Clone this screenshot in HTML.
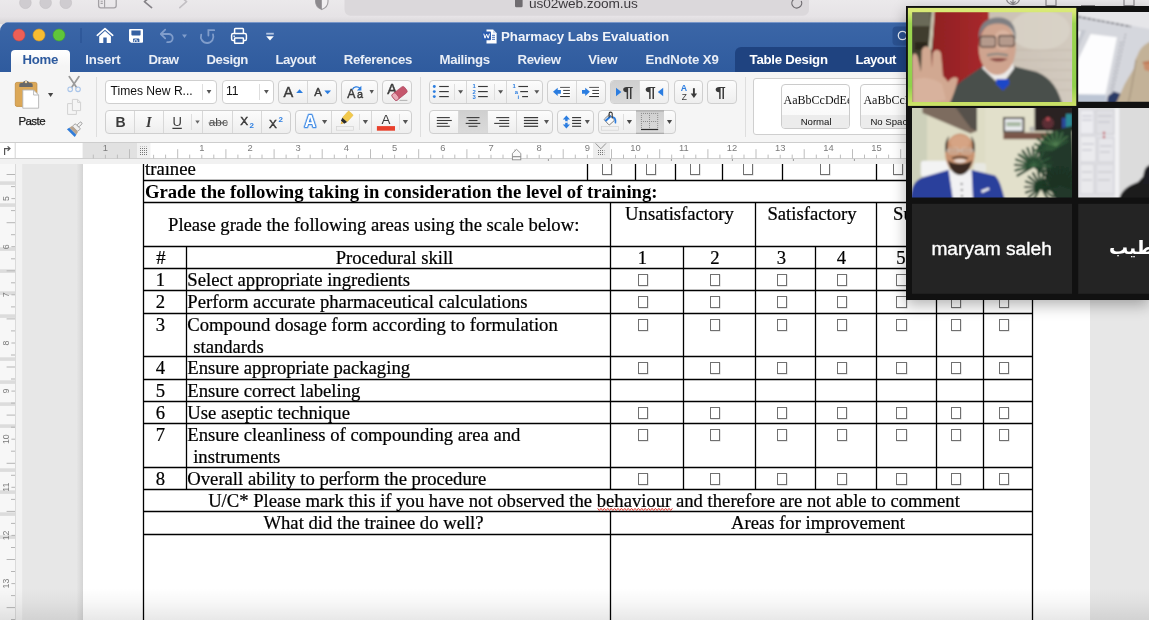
<!DOCTYPE html>
<html><head><meta charset="utf-8"><title>Pharmacy Labs Evaluation</title>
<style>
*{box-sizing:border-box;margin:0;padding:0}
html,body{width:1149px;height:620px;overflow:hidden;background:#e9e7e9;font-family:"Liberation Sans",sans-serif;-webkit-font-smoothing:antialiased}
#word,#zoom,#safari{will-change:transform}
.abs{position:absolute}
#safari{position:absolute;left:0;top:0;width:1149px;height:24px;background:#e9e6e8;overflow:hidden}
#word{position:absolute;left:0;top:22px;width:1149px;height:598px;background:#e4e4e4;border-top-left-radius:9px;overflow:hidden}
#title{position:absolute;left:0;top:0;width:1149px;height:50px;background:linear-gradient(#3b66a7,#2f5b9e)}
.tab{position:absolute;top:30px;color:#e9eef6;font-size:13.2px;font-weight:bold;white-space:nowrap;line-height:16px}
#ribbon{position:absolute;left:0;top:50px;width:1149px;height:71px;background:#f5f5f5;border-bottom:1px solid #cdcdcd}
.grp{position:absolute;height:23.4px;border:1px solid #cfcfcf;border-radius:4px;background:linear-gradient(#fcfcfc,#eeeeee);overflow:hidden}
.dv{position:absolute;top:0;width:1px;height:21.4px;background:#d8d8d8}
#ruler{position:absolute;left:0;top:121px;width:1149px;height:22px;overflow:hidden}
#doc{position:absolute;left:0;top:142px;width:1149px;height:456px;background:#e7e7e7;overflow:hidden}
#page{position:absolute;left:83px;top:0;width:1007px;height:456px;background:#fff}
.hl{position:absolute;background:#000}
.vl{position:absolute;background:#000}
.t{position:absolute;font-family:"Liberation Serif",serif;font-size:18.67px;line-height:22px;white-space:nowrap;color:#000;-webkit-text-stroke:0.22px #000}
.cb{position:absolute;width:10.4px;height:12.2px;border:0.9px solid #707070;background:#fff;box-shadow:0.5px 0.5px 0 #d0d0d0}
.sq{text-decoration:underline wavy #d33;text-decoration-thickness:1px;text-underline-offset:2px}
#zoom{position:absolute;left:906px;top:6px;width:243px;height:293.5px;background:#111;overflow:hidden;box-shadow:0 5px 14px rgba(0,0,0,0.30)}

.t.b{-webkit-text-stroke:0}
</style></head><body>
<div id="safari">
<svg class="abs" style="left:0;top:0" width="1149" height="24">
 <defs><linearGradient id="sg" x1="0" y1="0" x2="0" y2="1"><stop offset="0" stop-color="#ebe9eb"/><stop offset="0.7" stop-color="#e6e3e6"/><stop offset="1" stop-color="#d6d3d6"/></linearGradient></defs>
 <rect x="0" y="0" width="1149" height="24" fill="url(#sg)"/>
 <circle cx="25.4" cy="2.8" r="5.8" fill="#cfccd0" stroke="#c2bfc3" stroke-width="0.6"/>
 <circle cx="45.6" cy="2.8" r="5.8" fill="#cfccd0" stroke="#c2bfc3" stroke-width="0.6"/>
 <circle cx="65.8" cy="2.8" r="5.8" fill="#cfccd0" stroke="#c2bfc3" stroke-width="0.6"/>
 <rect x="98.6" y="-6" width="17.6" height="13.8" rx="2.2" fill="none" stroke="#a3a0a4" stroke-width="1.3"/>
 <path d="M104.6 -6V7.8M100.6 1.2H102.8M100.6 3.4H102.8" stroke="#a3a0a4" stroke-width="1.1"/>
 <path d="M151.6 -4L144.4 1.6L151.6 7.6" stroke="#858287" stroke-width="1.6" fill="none" stroke-linecap="round" stroke-linejoin="round"/>
 <path d="M179.8 -4L186.6 1.6L179.8 7.6" stroke="#c3c0c4" stroke-width="1.6" fill="none" stroke-linecap="round" stroke-linejoin="round"/>
 <path d="M315.6 -4V1.5C315.6 5.5 318.6 8.3 321.8 9.6C325 8.3 328 5.5 328 1.5V-4Z" fill="#f1eff1" stroke="#a09da1" stroke-width="1.1"/>
 <path d="M315.6 -4V1.5C315.6 5.5 318.6 8.3 321.8 9.6V-4Z" fill="#8c898d"/>
 <rect x="344.5" y="-10" width="464.5" height="25.8" rx="6" fill="#dbd8db"/>
 <rect x="515" y="-3" width="7.6" height="10.2" rx="1.3" fill="#6f6c70"/>
 <path d="M793.6 -0.6A4.9 4.9 0 1 0 801.2 1" stroke="#6f6c70" stroke-width="1.2" fill="none"/>
 <path d="M1013 -2V3.6M1010.4 1.4L1013 4L1015.6 1.4M1006.4 -2A6.6 6.6 0 0 0 1019.6 -2" stroke="#8c898d" stroke-width="1.2" fill="none"/>
 <path d="M1046 -2V5.6H1056V-2M1081 5.6H1095M1124 -2V5.6H1134V-2" stroke="#8c898d" stroke-width="1.2" fill="none"/>
</svg>
<div class="abs" style="left:529px;top:-4.6px;font-size:13.7px;line-height:17px;color:#3d3a3e;white-space:nowrap;letter-spacing:-0.1px" id="url">us02web.zoom.us</div>
</div>
<div id="word">
<div id="title">
<div class="abs" style="left:0;top:0;width:1149px;height:1px;background:#7896c8"></div>
<div class="abs" style="left:735px;top:25px;width:414px;height:25px;background:#1f4380;border-top-left-radius:6px"></div>
<div class="abs" style="left:11px;top:28px;width:59px;height:23px;background:linear-gradient(#ffffff,#f5f5f5 70%);border-radius:4px 4px 0 0"></div>
<svg class="abs" style="left:0;top:0" width="1149" height="50" viewBox="0 22 1149 50">
 <!-- traffic lights -->
 <circle cx="19" cy="35" r="6" fill="#ee5f56" stroke="#d94a41" stroke-width="0.6"/>
 <circle cx="39" cy="35" r="6" fill="#f8bc31" stroke="#dfa023" stroke-width="0.6"/>
 <circle cx="59" cy="35" r="6" fill="#5fc63a" stroke="#4aa82a" stroke-width="0.6"/>
 <rect x="80.5" y="28" width="1" height="15" fill="#274f90"/>
 <!-- home -->
 <path d="M97.3 35.3L105 28.6L112.7 35.3" stroke="#fff" stroke-width="1.7" fill="none" stroke-linecap="round" stroke-linejoin="round"/>
 <path d="M99.2 36.2L105 31.1L110.9 36.2V43H106.7V37.6H103.3V43H99.2Z" fill="#fff"/>
 <!-- save -->
 <path d="M130 29H142a1 1 0 0 1 1 1V41.8a1 1 0 0 1-1 1H131L129 40.8V30a1 1 0 0 1 1-1Z" fill="#fff"/>
 <path d="M131.4 30.4H140.6V34.6a1 1 0 0 1-1 1H132.4a1 1 0 0 1-1-1Z" fill="#3560a2"/>
 <path d="M133 42V39.3a0.9 0.9 0 0 1 .9-.9H138.5a0.9 0.9 0 0 1 .9.9V42Z" fill="#3560a2"/>
 <path d="M134.3 42V40.6a0.8 0.8 0 0 1 .8-.8h1.2a0.8 0.8 0 0 1 .8.8V42" fill="none" stroke="#fff" stroke-width="0.9"/>
 <!-- undo -->
 <path d="M165.2 29.6L160.8 34L165.2 38.4M161 34H168.6a4.1 4.1 0 0 1 0 8.2H167.2" stroke="#809dcb" stroke-width="1.8" fill="none" stroke-linecap="round" stroke-linejoin="round"/>
 <path d="M182 34.4H187L184.5 37.9Z" fill="#809dcb"/>
 <!-- redo (circular arrow) -->
 <path d="M201.2 34.6A6.3 6.3 0 1 0 213 34.4" stroke="#809dcb" stroke-width="1.8" fill="none" stroke-linecap="round"/>
 <path d="M214.2 30.2H208.4V35.6" stroke="#809dcb" stroke-width="1.8" fill="none" stroke-linecap="round" stroke-linejoin="miter"/>
 <!-- print -->
 <rect x="234.6" y="28.6" width="8.8" height="6" rx="0.8" fill="none" stroke="#fff" stroke-width="1.5"/>
 <rect x="231.6" y="33.6" width="14.8" height="7" rx="1.6" fill="#3560a2" stroke="#fff" stroke-width="1.5"/>
 <rect x="234.6" y="38" width="8.8" height="5.2" rx="0.5" fill="#3560a2" stroke="#fff" stroke-width="1.5"/>
 <rect x="233.4" y="35.6" width="1.6" height="1.2" fill="#fff"/>
 <!-- customize -->
 <rect x="266.2" y="32.8" width="7.6" height="1.8" fill="#b4c5e2"/>
 <path d="M266.2 36.2H273.8L270 40.4Z" fill="#fff"/>
 <!-- word doc icon -->
 <path d="M486.5 29.6H493L496.6 33.2V43.4H486.5Z" fill="#fff"/>
 <path d="M493 29.6V33.2H496.6Z" fill="#c9d6ea"/>
 <rect x="482.4" y="31.6" width="8.6" height="8.6" rx="1" fill="#2b5cb0"/>
 <path d="M483.8 33.7L485 38.2L486.6 34.2L488.2 38.2L489.5 33.7" stroke="#fff" stroke-width="1" fill="none" stroke-linejoin="round"/>
 <path d="M492 35.3H495M492 37.3H495M492 39.3H495" stroke="#2b5cb0" stroke-width="0.9"/>
 <!-- search box -->
 <rect x="892.5" y="26.5" width="60" height="19" rx="4" fill="#2a5190"/>
 <circle cx="902.5" cy="35.5" r="4.2" fill="none" stroke="#e4ebf5" stroke-width="1.3"/>
</svg>
<div class="abs" id="doctitle" style="left:501px;top:6px;color:#f0f3f9;font-weight:bold;font-size:13.3px;line-height:17px;white-space:nowrap;letter-spacing:-0.05px">Pharmacy Labs Evaluation</div>
<div class="tab" id="tb0" style="left:22.6px;letter-spacing:-0.28px;color:#2d5a9e">Home</div>
<div class="tab" id="tb1" style="left:85.3px;letter-spacing:-0.10px">Insert</div>
<div class="tab" id="tb2" style="left:148.5px;letter-spacing:-0.58px">Draw</div>
<div class="tab" id="tb3" style="left:206.5px;letter-spacing:-0.43px">Design</div>
<div class="tab" id="tb4" style="left:275.4px;letter-spacing:-0.49px">Layout</div>
<div class="tab" id="tb5" style="left:343.7px;letter-spacing:-0.27px">References</div>
<div class="tab" id="tb6" style="left:439.6px;letter-spacing:-0.34px">Mailings</div>
<div class="tab" id="tb7" style="left:517.5px;letter-spacing:-0.39px">Review</div>
<div class="tab" id="tb8" style="left:588.3px;letter-spacing:-0.24px">View</div>
<div class="tab" id="tb9" style="left:645.5px;letter-spacing:-0.07px">EndNote X9</div>
<div class="tab" id="tb10" style="left:749.6px;letter-spacing:-0.25px;color:#fff">Table Design</div>
<div class="tab" id="tb11" style="left:855.6px;letter-spacing:-0.49px;color:#fff">Layout</div>
</div>
<div id="ribbon">
<div class="grp" style="left:105.3px;top:8.3px;width:111.6px;background:#fff;"><div class="dv" style="left:95.6px;top:3px;height:16px;background:#dedede"></div></div>
<div class="grp" style="left:221.6px;top:8.3px;width:52.5px;background:#fff;"><div class="dv" style="left:36.3px;top:3px;height:16px;background:#dedede"></div></div>
<div class="grp" style="left:278.4px;top:8.3px;width:58.5px;"><div class="dv" style="left:27.5px"></div></div>
<div class="grp" style="left:341.4px;top:8.3px;width:36.5px;"></div>
<div class="grp" style="left:382.4px;top:8.3px;width:29.5px;"></div>
<div class="grp" style="left:429.4px;top:8.3px;width:113.5px;"><div class="dv" style="left:35.7px"></div><div class="dv" style="left:75.7px"></div><div class="dv" style="left:23.5px;top:3px;height:16px;background:#dedede"></div><div class="dv" style="left:63.5px;top:3px;height:16px;background:#dedede"></div></div>
<div class="grp" style="left:547.4px;top:8.3px;width:58.5px;"><div class="dv" style="left:27.5px"></div></div>
<div class="grp" style="left:610.4px;top:8.3px;width:58.5px;"><div class="abs" style="left:-1.0px;top:0;width:29.2px;height:21.4px;background:linear-gradient(#d0d0d0,#dadada)"></div><div class="dv" style="left:27.7px"></div></div>
<div class="grp" style="left:673.6px;top:8.3px;width:29.3px;"></div>
<div class="grp" style="left:707.4px;top:8.3px;width:29.5px;"></div>
<div class="grp" style="left:105.3px;top:38.4px;width:185.6px;"><div class="dv" style="left:27.8px"></div><div class="dv" style="left:56.6px"></div><div class="dv" style="left:96.2px"></div><div class="dv" style="left:125.8px"></div><div class="dv" style="left:154.8px"></div><div class="dv" style="left:84.6px;top:3px;height:16px;background:#dedede"></div></div>
<div class="grp" style="left:295.4px;top:38.4px;width:116.5px;"><div class="dv" style="left:34.5px"></div><div class="dv" style="left:74.5px"></div><div class="dv" style="left:62.5px;top:3px;height:16px;background:#dedede"></div><div class="dv" style="left:102.5px;top:3px;height:16px;background:#dedede"></div></div>
<div class="grp" style="left:429.4px;top:38.4px;width:123.5px;"><div class="abs" style="left:28.2px;top:0;width:29.0px;height:21.4px;background:linear-gradient(#d0d0d0,#dadada)"></div><div class="dv" style="left:27.7px"></div><div class="dv" style="left:56.7px"></div><div class="dv" style="left:85.7px"></div></div>
<div class="grp" style="left:557.4px;top:38.4px;width:36.5px;"></div>
<div class="grp" style="left:598.0px;top:38.4px;width:77.9px;"><div class="abs" style="left:36.6px;top:0;width:28.4px;height:21.4px;background:linear-gradient(#d0d0d0,#dadada)"></div><div class="dv" style="left:24.1px;top:3px;height:16px;background:#dedede"></div></div>
<div class="abs" style="left:95.8px;top:5px;width:1px;height:60px;background:#dedede"></div>
<div class="abs" style="left:419.9px;top:5px;width:1px;height:60px;background:#dedede"></div>
<div class="abs" style="left:744.9px;top:5px;width:1px;height:60px;background:#dedede"></div>
<div class="abs" style="left:753px;top:6.4px;width:420px;height:57px;background:#fff;border:1px solid #cfcfcf;border-radius:3px"></div>
<div class="abs" style="left:780.6px;top:12.4px;width:69px;height:45px;border:1px solid #cbcbcb;border-radius:4px;background:linear-gradient(#ffffff,#f7f7f7);overflow:hidden"><div class="abs" style="left:2px;top:7.4px;font-family:'Liberation Serif',serif;font-size:12px;line-height:14px;white-space:nowrap;color:#111">AaBbCcDdEe</div><div class="abs" style="left:0;top:30px;width:69px;height:14px;background:#ececec;font-size:9.6px;line-height:14px;text-align:center;color:#111;white-space:nowrap;padding-left:0;text-align:center">Normal</div></div>
<div class="abs" style="left:860.4px;top:12.4px;width:69px;height:45px;border:1px solid #cbcbcb;border-radius:4px;background:linear-gradient(#ffffff,#f7f7f7);overflow:hidden"><div class="abs" style="left:2px;top:7.4px;font-family:'Liberation Serif',serif;font-size:12px;line-height:14px;white-space:nowrap;color:#111">AaBbCcDdEe</div><div class="abs" style="left:0;top:30px;width:69px;height:14px;background:#ececec;font-size:9.6px;line-height:14px;text-align:center;color:#111;white-space:nowrap;padding-left:9px;text-align:left">No Spacing</div></div>
<div class="abs" style="left:18.4px;top:41.8px;font-size:11.5px;line-height:14px;color:#1a1a1a;letter-spacing:-0.55px;-webkit-text-stroke:0.25px #1a1a1a" id="paste">Paste</div>
<div class="abs" style="left:110.5px;top:12.3px;font-size:12.1px;line-height:15px;color:#111;white-space:nowrap" id="fname">Times New R...</div>
<div class="abs" style="left:226px;top:12.3px;font-size:12.1px;line-height:15px;color:#111;white-space:nowrap" id="fsize">11</div>
<svg class="abs" style="left:0;top:0" width="1149" height="70" viewBox="0 72 1149 70">
<rect x="15.3" y="82.4" width="21.6" height="24" rx="1.6" fill="#dca857" stroke="#c18d3f" stroke-width="0.8"/>
<path d="M19.3 86.9V84.8a1.8 1.8 0 0 1 1.8-1.8H22.7a3.4 3.4 0 0 1 6.6 0H30.9a1.8 1.8 0 0 1 1.8 1.8V86.9Z" fill="#686868"/>
<circle cx="26" cy="82" r="1.25" fill="#edd3a4"/>
<path d="M22.8 90H33.6L38.6 95V108.2H22.8Z" fill="#fff" stroke="#b4b4b4" stroke-width="0.9" stroke-linejoin="round"/>
<path d="M33.6 90V95H38.6" fill="none" stroke="#b4b4b4" stroke-width="0.9"/>
<path d="M48.0 93.0H53.2L50.6 96.9Z" fill="#444"/>
<path d="M69.2 76.6L76.6 87.4M79 76.6L71.6 87.4" stroke="#9a9a9a" stroke-width="1.7" stroke-linecap="round"/>
<circle cx="70.2" cy="89.3" r="2.3" fill="none" stroke="#a9c5ea" stroke-width="1.1"/><circle cx="78" cy="89.3" r="2.3" fill="none" stroke="#a9c5ea" stroke-width="1.1"/>
<path d="M72.4 99.4H77.6L80.6 102.4V110.6H72.4Z" fill="#f5f5f5" stroke="#d2d2d2" stroke-width="1"/><path d="M77.6 99.4V102.4H80.6" fill="none" stroke="#d2d2d2" stroke-width="1"/>
<path d="M67.6 103.6H72.4V110.6H76.4V114.4H67.6Z" fill="#f5f5f5" stroke="#d2d2d2" stroke-width="1"/>
<g transform="rotate(45 74 130)"><rect x="72.7" y="119.4" width="2.6" height="5.6" rx="1.1" fill="#f4f4f4" stroke="#8c8c8c" stroke-width="0.8"/><rect x="70.3" y="124.6" width="7.4" height="3.9" rx="0.8" fill="#f0f0f0" stroke="#8c8c8c" stroke-width="0.8"/><path d="M69.8 128.6H78.2L79 131.7H69Z" fill="#b9a48f"/><path d="M69 131.7H79L79.5 134.5H68.5Z" fill="#2f7bd8"/></g>
<path d="M206.6 90.0H211.4L209.0 93.8Z" fill="#555"/>
<path d="M264.0 90.0H268.8L266.4 93.8Z" fill="#555"/>
<text x="283.4" y="96.9" font-family="Liberation Sans" font-size="14.6" font-weight="normal" fill="#3a3a3a" text-anchor="start" stroke="#3a3a3a" stroke-width="0.42">A</text>
<path d="M296.2 93H303L299.6 89.2Z" fill="#2b7de0"/>
<text x="314.3" y="95.9" font-family="Liberation Sans" font-size="11.4" font-weight="normal" fill="#3a3a3a" text-anchor="start" stroke="#3a3a3a" stroke-width="0.42">A</text>
<path d="M324.3 90.4H331L327.65 94.2Z" fill="#2b7de0"/>
<text x="347.2" y="97.9" font-family="Liberation Sans" font-size="12.2" font-weight="normal" fill="#3a3a3a" text-anchor="start" stroke="#3a3a3a" stroke-width="0.42">A</text>
<text x="357" y="97.9" font-family="Liberation Sans" font-size="10.8" font-weight="normal" fill="#3a3a3a" text-anchor="start" stroke="#3a3a3a" stroke-width="0.42">a</text>
<path d="M352.4 89.6C353.6 86.6 357.6 86 360 88.2" stroke="#2b7de0" stroke-width="1.3" fill="none"/><path d="M361.4 85.8V90.4H356.9Z" fill="#2b7de0"/>
<path d="M369.5 90.0H373.9L371.7 93.8Z" fill="#555"/>
<text x="387.3" y="94.1" font-family="Liberation Sans" font-size="14.4" font-weight="normal" fill="#3a3a3a" text-anchor="start" stroke="#3a3a3a" stroke-width="0.42">A</text>
<g transform="rotate(-38 399.5 93.5)"><rect x="391.9" y="89.7" width="15.4" height="7.6" rx="2" fill="#c5576d" stroke="#a8405a" stroke-width="0.6"/><rect x="391.9" y="89.7" width="4.8" height="7.6" rx="1.8" fill="#e8aab6" stroke="#a8405a" stroke-width="0.6"/></g>
<path d="M399.5 100.4H407.4" stroke="#aaa" stroke-width="0.9"/>
<circle cx="434.3" cy="86.5" r="1.45" fill="#2b7de0"/><path d="M439.2 86.5H448.8" stroke="#3a3a3a" stroke-width="1.15"/>
<circle cx="434.3" cy="91.6" r="1.45" fill="#2b7de0"/><path d="M439.2 91.6H448.8" stroke="#3a3a3a" stroke-width="1.15"/>
<circle cx="434.3" cy="96.6" r="1.45" fill="#2b7de0"/><path d="M439.2 96.6H448.8" stroke="#3a3a3a" stroke-width="1.15"/>
<path d="M458.1 90.2H463.1L460.6 93.8Z" fill="#555"/>
<text x="472.6" y="88.39999999999999" font-family="Liberation Sans" font-size="5.9" font-weight="bold" fill="#2b7de0" text-anchor="start" >1</text>
<path d="M478.1 86.5H487.8" stroke="#3a3a3a" stroke-width="1.15"/>
<text x="472.6" y="93.5" font-family="Liberation Sans" font-size="5.9" font-weight="bold" fill="#2b7de0" text-anchor="start" >2</text>
<path d="M478.1 91.60000000000001H487.8" stroke="#3a3a3a" stroke-width="1.15"/>
<text x="472.6" y="98.5" font-family="Liberation Sans" font-size="5.9" font-weight="bold" fill="#2b7de0" text-anchor="start" >3</text>
<path d="M478.1 96.60000000000001H487.8" stroke="#3a3a3a" stroke-width="1.15"/>
<path d="M498.1 90.2H503.1L500.6 93.8Z" fill="#555"/>
<text x="512.6" y="88.4" font-family="Liberation Sans" font-size="5.9" font-weight="bold" fill="#2b7de0" text-anchor="start" >1</text>
<path d="M518.4 86.5H528" stroke="#3a3a3a" stroke-width="1.15"/>
<text x="514.8" y="93.5" font-family="Liberation Sans" font-size="5.9" font-weight="bold" fill="#2b7de0" text-anchor="start" >a</text>
<path d="M520.2 91.6H528" stroke="#3a3a3a" stroke-width="1.15"/>
<text x="517.4" y="98.5" font-family="Liberation Sans" font-size="5.9" font-weight="bold" fill="#2b7de0" text-anchor="start" >i</text>
<path d="M522.1 96.6H528" stroke="#3a3a3a" stroke-width="1.15"/>
<path d="M534.3 90.2H539.3L536.8 93.8Z" fill="#555"/>
<rect x="559.5" y="86.4" width="11" height="11.2" fill="#fff" opacity="0.85"/>
<path d="M560.1 87.4H569.9" stroke="#5a5a5a" stroke-width="1.05"/>
<path d="M563.2 90.45H569.9" stroke="#4a4a4a" stroke-width="1.05"/>
<path d="M563.2 93.5H569.9" stroke="#404040" stroke-width="1.05"/>
<path d="M560.1 96.55H569.9" stroke="#333" stroke-width="1.05"/>
<path d="M553 91.85L557.7 87.8V89.9H560.9V93.8H557.7V95.9Z" fill="#2b7de0"/>
<rect x="588.6" y="86.4" width="11" height="11.2" fill="#fff" opacity="0.85"/>
<path d="M589.2 87.4H599.0" stroke="#5a5a5a" stroke-width="1.05"/>
<path d="M592.3 90.45H599.0" stroke="#4a4a4a" stroke-width="1.05"/>
<path d="M592.3 93.5H599.0" stroke="#404040" stroke-width="1.05"/>
<path d="M589.2 96.55H599.0" stroke="#333" stroke-width="1.05"/>
<path d="M589.9 91.85L585.2 87.8V89.9H582V93.8H585.2V95.9Z" fill="#2b7de0"/>
<path d="M616 87.8V96.2L621.4 92Z" fill="#2b7de0"/>
<text transform="translate(622.4 96.9) scale(1.27 1)" font-family="Liberation Sans" font-size="15.4" font-weight="bold" fill="#3a3a3a">¶</text>
<text transform="translate(644.9 96.9) scale(1.27 1)" font-family="Liberation Sans" font-size="15.4" font-weight="bold" fill="#3a3a3a">¶</text>
<path d="M663.2 87.8V96.2L657.8 92Z" fill="#2b7de0"/>
<text x="684" y="90.7" font-family="Liberation Sans" font-size="8.8" font-weight="bold" fill="#2b7de0" text-anchor="middle" >A</text>
<text x="684.2" y="99.6" font-family="Liberation Sans" font-size="8.4" font-weight="normal" fill="#3a3a3a" text-anchor="middle" >Z</text>
<path d="M693.9 88.2V94.6" stroke="#3a3a3a" stroke-width="1.9"/><path d="M690.7 93.6H697.1L693.9 97.9Z" fill="#3a3a3a"/>
<text transform="translate(715.0 96.9) scale(1.27 1)" font-family="Liberation Sans" font-size="15.4" font-weight="bold" fill="#3a3a3a">¶</text>
<text x="115.4" y="126.9" font-family="Liberation Sans" font-size="14" font-weight="bold" fill="#3a3a3a" text-anchor="start" >B</text>
<text x="148.8" y="126.9" font-family="Liberation Serif" font-size="14.4" font-weight="bold" fill="#3a3a3a" text-anchor="middle" font-style="italic">I</text>
<text x="177.1" y="126.3" font-family="Liberation Sans" font-size="13" font-weight="normal" fill="#3a3a3a" text-anchor="middle" >U</text>
<path d="M172.4 128.4H181.8" stroke="#3a3a3a" stroke-width="1.1"/>
<path d="M195.3 120.4H199.7L197.5 123.8Z" fill="#666"/>
<text x="218.3" y="126.3" font-family="Liberation Sans" font-size="11.8" font-weight="normal" fill="#4a4a4a" text-anchor="middle" >abc</text>
<path d="M208.6 122.9H228" stroke="#555" stroke-width="0.9"/>
<text x="240.2" y="124.8" font-family="Liberation Sans" font-size="11.8" font-weight="normal" fill="#3a3a3a" text-anchor="start" stroke="#3a3a3a" stroke-width="0.45">X</text>
<text x="249.5" y="128.2" font-family="Liberation Sans" font-size="8" font-weight="bold" fill="#2b7de0" text-anchor="start" >2</text>
<text x="268.9" y="127.9" font-family="Liberation Sans" font-size="11.8" font-weight="normal" fill="#3a3a3a" text-anchor="start" stroke="#3a3a3a" stroke-width="0.45">X</text>
<text x="278.5" y="121.7" font-family="Liberation Sans" font-size="8" font-weight="bold" fill="#2b7de0" text-anchor="start" >2</text>
<text x="310.2" y="127.4" font-family="Liberation Sans" font-size="15.8" font-weight="bold" text-anchor="middle" fill="#fff" stroke="#9cc4f3" stroke-width="3" stroke-linejoin="round">A</text>
<text x="310.2" y="127.4" font-family="Liberation Sans" font-size="15.8" font-weight="bold" text-anchor="middle" fill="#fff" stroke="#2b7de0" stroke-width="1.5" stroke-linejoin="round" paint-order="stroke">A</text>
<path d="M322.0 119.9H327.2L324.6 123.9Z" fill="#555"/>
<g transform="rotate(42 345.5 119)"><rect x="342.3" y="110.8" width="6.4" height="9.4" rx="1" fill="#f2c94c" stroke="#e0b63a" stroke-width="0.5"/><path d="M342.3 120.2H348.7L347.7 123.4H343.3Z" fill="#2a2a2a"/><path d="M343.9 123.4H347.1L345.5 126.2Z" fill="#e3b33c"/></g>
<rect x="336.4" y="126.6" width="17" height="3.6" fill="#f1f1f1" stroke="#d3d3d3" stroke-width="0.7"/>
<path d="M362.8 119.9H368.0L365.4 123.9Z" fill="#555"/>
<text x="385.9" y="124.1" font-family="Liberation Sans" font-size="13.4" font-weight="normal" fill="#3a3a3a" text-anchor="middle" >A</text>
<rect x="376.9" y="126.1" width="18.1" height="4.6" fill="#e8402c"/>
<path d="M402.8 119.9H408.0L405.4 123.9Z" fill="#555"/>
<path d="M436.8 117.6h13" stroke="#3a3a3a" stroke-width="1.1"/>
<path d="M436.8 120.5h15" stroke="#3a3a3a" stroke-width="1.1"/>
<path d="M436.8 123.4h11" stroke="#3a3a3a" stroke-width="1.1"/>
<path d="M436.8 126.3h13" stroke="#3a3a3a" stroke-width="1.1"/>
<path d="M466.5 117.6h13" stroke="#3a3a3a" stroke-width="1.1"/>
<path d="M468.5 120.5h9" stroke="#3a3a3a" stroke-width="1.1"/>
<path d="M465.7 123.4h14.6" stroke="#3a3a3a" stroke-width="1.1"/>
<path d="M468.5 126.3h9" stroke="#3a3a3a" stroke-width="1.1"/>
<path d="M496.2 117.6h13" stroke="#3a3a3a" stroke-width="1.1"/>
<path d="M499.2 120.5h10" stroke="#3a3a3a" stroke-width="1.1"/>
<path d="M494.2 123.4h15" stroke="#3a3a3a" stroke-width="1.1"/>
<path d="M499.2 126.3h10" stroke="#3a3a3a" stroke-width="1.1"/>
<path d="M523.9 117.6H538.1" stroke="#3a3a3a" stroke-width="1.25"/>
<path d="M523.9 120.5H538.1" stroke="#3a3a3a" stroke-width="1.25"/>
<path d="M523.9 123.4H538.1" stroke="#3a3a3a" stroke-width="1.25"/>
<path d="M523.9 126.3H538.1" stroke="#3a3a3a" stroke-width="1.25"/>
<path d="M544.0 120.1H549.0L546.5 123.9Z" fill="#555"/>
<path d="M566.4 115.4L562.8 119.4H565.2V124.6H562.8L566.4 128.6L570 124.6H567.6V119.4H570Z" fill="#2b7de0"/>
<rect x="565" y="121.2" width="2.8" height="1.6" fill="#f3f3f3"/>
<path d="M572.1 117.6H581.1" stroke="#3a3a3a" stroke-width="1.15"/>
<path d="M572.1 120.5H581.1" stroke="#3a3a3a" stroke-width="1.15"/>
<path d="M572.1 123.4H581.1" stroke="#3a3a3a" stroke-width="1.15"/>
<path d="M572.1 126.3H581.1" stroke="#3a3a3a" stroke-width="1.15"/>
<path d="M584.8 120.1H589.8L587.3 123.9Z" fill="#555"/>
<g transform="rotate(-42 609.3 119.8)"><rect x="605.6" y="115.9" width="7.4" height="7.8" rx="0.9" fill="#fbfbfb" stroke="#7a7a7a" stroke-width="0.9"/><rect x="605.6" y="117" width="7.4" height="2.1" fill="#2b7de0"/></g>
<path d="M612.4 116.3C615.6 116.5 617 119.6 616.1 123.5C615.3 123.9 614.5 123.1 614.6 122C614.9 119.6 614 118.2 611.8 117.5Z" fill="#2b7de0"/>
<path d="M609.1 117.6V113.7a1.55 1.55 0 0 1 3.1 0V118.2" stroke="#333" stroke-width="1.1" fill="none"/>
<rect x="601.6" y="126.6" width="17" height="3.6" fill="#f1f1f1" stroke="#d3d3d3" stroke-width="0.7"/>
<path d="M626.8 120.0H632.0L629.4 124.0Z" fill="#4a4a4a"/>
<rect x="640.95" y="112.95" width="0.9" height="0.9" fill="#7c7c7c"/>
<rect x="640.95" y="121.07" width="0.9" height="0.9" fill="#7c7c7c"/>
<rect x="642.99" y="112.95" width="0.9" height="0.9" fill="#7c7c7c"/>
<rect x="642.99" y="121.07" width="0.9" height="0.9" fill="#7c7c7c"/>
<rect x="645.03" y="112.95" width="0.9" height="0.9" fill="#7c7c7c"/>
<rect x="645.03" y="121.07" width="0.9" height="0.9" fill="#7c7c7c"/>
<rect x="647.07" y="112.95" width="0.9" height="0.9" fill="#7c7c7c"/>
<rect x="647.07" y="121.07" width="0.9" height="0.9" fill="#7c7c7c"/>
<rect x="649.11" y="112.95" width="0.9" height="0.9" fill="#7c7c7c"/>
<rect x="649.11" y="121.07" width="0.9" height="0.9" fill="#7c7c7c"/>
<rect x="651.15" y="112.95" width="0.9" height="0.9" fill="#7c7c7c"/>
<rect x="651.15" y="121.07" width="0.9" height="0.9" fill="#7c7c7c"/>
<rect x="653.19" y="112.95" width="0.9" height="0.9" fill="#7c7c7c"/>
<rect x="653.19" y="121.07" width="0.9" height="0.9" fill="#7c7c7c"/>
<rect x="655.23" y="112.95" width="0.9" height="0.9" fill="#7c7c7c"/>
<rect x="655.23" y="121.07" width="0.9" height="0.9" fill="#7c7c7c"/>
<rect x="657.27" y="112.95" width="0.9" height="0.9" fill="#7c7c7c"/>
<rect x="657.27" y="121.07" width="0.9" height="0.9" fill="#7c7c7c"/>
<rect x="640.95" y="114.98" width="0.9" height="0.9" fill="#7c7c7c"/>
<rect x="649.11" y="114.98" width="0.9" height="0.9" fill="#7c7c7c"/>
<rect x="657.27" y="114.98" width="0.9" height="0.9" fill="#7c7c7c"/>
<rect x="640.95" y="117.01" width="0.9" height="0.9" fill="#7c7c7c"/>
<rect x="649.11" y="117.01" width="0.9" height="0.9" fill="#7c7c7c"/>
<rect x="657.27" y="117.01" width="0.9" height="0.9" fill="#7c7c7c"/>
<rect x="640.95" y="119.04" width="0.9" height="0.9" fill="#7c7c7c"/>
<rect x="649.11" y="119.04" width="0.9" height="0.9" fill="#7c7c7c"/>
<rect x="657.27" y="119.04" width="0.9" height="0.9" fill="#7c7c7c"/>
<rect x="640.95" y="123.10" width="0.9" height="0.9" fill="#7c7c7c"/>
<rect x="649.11" y="123.10" width="0.9" height="0.9" fill="#7c7c7c"/>
<rect x="657.27" y="123.10" width="0.9" height="0.9" fill="#7c7c7c"/>
<rect x="640.95" y="125.13" width="0.9" height="0.9" fill="#7c7c7c"/>
<rect x="649.11" y="125.13" width="0.9" height="0.9" fill="#7c7c7c"/>
<rect x="657.27" y="125.13" width="0.9" height="0.9" fill="#7c7c7c"/>
<rect x="640.95" y="127.16" width="0.9" height="0.9" fill="#7c7c7c"/>
<rect x="649.11" y="127.16" width="0.9" height="0.9" fill="#7c7c7c"/>
<rect x="657.27" y="127.16" width="0.9" height="0.9" fill="#7c7c7c"/>
<path d="M641 129.5H658.2" stroke="#2e2e2e" stroke-width="1.2"/>
<path d="M636 110.9H664M636 133.3H664" stroke="#a2a2a2" stroke-width="1"/>
<path d="M666.9 120.0H672.1L669.5 124.0Z" fill="#4a4a4a"/>
</svg></div>
<div id="ruler">
<svg class="abs" style="left:0;top:0" width="1149" height="22" viewBox="0 143 1149 22">
<rect x="0" y="143" width="1149" height="15.5" fill="#fff"/>
<rect x="0" y="158.5" width="1149" height="7" fill="#f1f1f1"/>
<rect x="82.6" y="143" width="54.4" height="15.5" fill="#e1e1e1"/>
<rect x="1090" y="143" width="59" height="15.5" fill="#e1e1e1"/>
<defs><pattern id="ht" width="2" height="2" patternUnits="userSpaceOnUse"><rect x="0" y="0" width="1" height="1" fill="#777"/></pattern></defs>
<rect x="137" y="143" width="13.4" height="15.5" fill="#f0f0f0"/><rect x="140" y="146.6" width="8" height="9" fill="url(#ht)"/>
<rect x="593" y="143" width="17" height="15.5" fill="#eeeeee"/><rect x="597.4" y="149" width="7" height="7" fill="url(#ht)"/>
<path d="M595.6 143.4L600.8 148.8L606 143.4" stroke="#8a8a8a" stroke-width="0.9" fill="none"/>
<path d="M0 158.5H1149" stroke="#cfcfcf" stroke-width="1"/>
<path d="M15.2 143V158.5" stroke="#d4d4d4" stroke-width="1"/>
<path d="M4.6 155V148.6H9.6M7.6 146.4L10 148.6L7.6 150.8" stroke="#555" stroke-width="1.2" fill="none"/>
<path d="M93.3 154.6V158.5" stroke="#bdbdbd" stroke-width="1"/>
<text x="105.4" y="151" font-family="Liberation Sans" font-size="9.4" fill="#7b7b7b" text-anchor="middle">1</text>
<path d="M105.4 154.8V158.5" stroke="#bdbdbd" stroke-width="1"/>
<path d="M117.4 154.6V158.5" stroke="#bdbdbd" stroke-width="1"/>
<path d="M129.5 149.2V158.5" stroke="#bdbdbd" stroke-width="1"/>
<path d="M153.6 154.8V158.5" stroke="#bdbdbd" stroke-width="1"/>
<path d="M165.6 154.6V158.5" stroke="#bdbdbd" stroke-width="1"/>
<path d="M177.7 149.2V158.5" stroke="#bdbdbd" stroke-width="1"/>
<path d="M189.7 154.6V158.5" stroke="#bdbdbd" stroke-width="1"/>
<text x="201.8" y="151" font-family="Liberation Sans" font-size="9.4" fill="#7b7b7b" text-anchor="middle">1</text>
<path d="M201.8 154.8V158.5" stroke="#bdbdbd" stroke-width="1"/>
<path d="M213.8 154.6V158.5" stroke="#bdbdbd" stroke-width="1"/>
<path d="M225.9 149.2V158.5" stroke="#bdbdbd" stroke-width="1"/>
<path d="M237.9 154.6V158.5" stroke="#bdbdbd" stroke-width="1"/>
<text x="250.0" y="151" font-family="Liberation Sans" font-size="9.4" fill="#7b7b7b" text-anchor="middle">2</text>
<path d="M250.0 154.8V158.5" stroke="#bdbdbd" stroke-width="1"/>
<path d="M262.0 154.6V158.5" stroke="#bdbdbd" stroke-width="1"/>
<path d="M274.1 149.2V158.5" stroke="#bdbdbd" stroke-width="1"/>
<path d="M286.1 154.6V158.5" stroke="#bdbdbd" stroke-width="1"/>
<text x="298.2" y="151" font-family="Liberation Sans" font-size="9.4" fill="#7b7b7b" text-anchor="middle">3</text>
<path d="M298.2 154.8V158.5" stroke="#bdbdbd" stroke-width="1"/>
<path d="M310.2 154.6V158.5" stroke="#bdbdbd" stroke-width="1"/>
<path d="M322.2 149.2V158.5" stroke="#bdbdbd" stroke-width="1"/>
<path d="M334.3 154.6V158.5" stroke="#bdbdbd" stroke-width="1"/>
<text x="346.4" y="151" font-family="Liberation Sans" font-size="9.4" fill="#7b7b7b" text-anchor="middle">4</text>
<path d="M346.4 154.8V158.5" stroke="#bdbdbd" stroke-width="1"/>
<path d="M358.4 154.6V158.5" stroke="#bdbdbd" stroke-width="1"/>
<path d="M370.5 149.2V158.5" stroke="#bdbdbd" stroke-width="1"/>
<path d="M382.5 154.6V158.5" stroke="#bdbdbd" stroke-width="1"/>
<text x="394.6" y="151" font-family="Liberation Sans" font-size="9.4" fill="#7b7b7b" text-anchor="middle">5</text>
<path d="M394.6 154.8V158.5" stroke="#bdbdbd" stroke-width="1"/>
<path d="M406.6 154.6V158.5" stroke="#bdbdbd" stroke-width="1"/>
<path d="M418.7 149.2V158.5" stroke="#bdbdbd" stroke-width="1"/>
<path d="M430.7 154.6V158.5" stroke="#bdbdbd" stroke-width="1"/>
<text x="442.8" y="151" font-family="Liberation Sans" font-size="9.4" fill="#7b7b7b" text-anchor="middle">6</text>
<path d="M442.8 154.8V158.5" stroke="#bdbdbd" stroke-width="1"/>
<path d="M454.8 154.6V158.5" stroke="#bdbdbd" stroke-width="1"/>
<path d="M466.9 149.2V158.5" stroke="#bdbdbd" stroke-width="1"/>
<path d="M478.9 154.6V158.5" stroke="#bdbdbd" stroke-width="1"/>
<text x="491.0" y="151" font-family="Liberation Sans" font-size="9.4" fill="#7b7b7b" text-anchor="middle">7</text>
<path d="M491.0 154.8V158.5" stroke="#bdbdbd" stroke-width="1"/>
<path d="M503.0 154.6V158.5" stroke="#bdbdbd" stroke-width="1"/>
<path d="M515.0 149.2V158.5" stroke="#bdbdbd" stroke-width="1"/>
<path d="M527.1 154.6V158.5" stroke="#bdbdbd" stroke-width="1"/>
<text x="539.2" y="151" font-family="Liberation Sans" font-size="9.4" fill="#7b7b7b" text-anchor="middle">8</text>
<path d="M539.2 154.8V158.5" stroke="#bdbdbd" stroke-width="1"/>
<path d="M551.2 154.6V158.5" stroke="#bdbdbd" stroke-width="1"/>
<path d="M563.2 149.2V158.5" stroke="#bdbdbd" stroke-width="1"/>
<path d="M575.3 154.6V158.5" stroke="#bdbdbd" stroke-width="1"/>
<text x="587.4" y="151" font-family="Liberation Sans" font-size="9.4" fill="#7b7b7b" text-anchor="middle">9</text>
<path d="M587.4 154.8V158.5" stroke="#bdbdbd" stroke-width="1"/>
<path d="M611.5 149.2V158.5" stroke="#bdbdbd" stroke-width="1"/>
<path d="M623.5 154.6V158.5" stroke="#bdbdbd" stroke-width="1"/>
<text x="635.5" y="151" font-family="Liberation Sans" font-size="9.4" fill="#7b7b7b" text-anchor="middle">10</text>
<path d="M635.5 154.8V158.5" stroke="#bdbdbd" stroke-width="1"/>
<path d="M647.6 154.6V158.5" stroke="#bdbdbd" stroke-width="1"/>
<path d="M659.7 149.2V158.5" stroke="#bdbdbd" stroke-width="1"/>
<path d="M671.7 154.6V158.5" stroke="#bdbdbd" stroke-width="1"/>
<text x="683.8" y="151" font-family="Liberation Sans" font-size="9.4" fill="#7b7b7b" text-anchor="middle">11</text>
<path d="M683.8 154.8V158.5" stroke="#bdbdbd" stroke-width="1"/>
<path d="M695.8 154.6V158.5" stroke="#bdbdbd" stroke-width="1"/>
<path d="M707.9 149.2V158.5" stroke="#bdbdbd" stroke-width="1"/>
<path d="M719.9 154.6V158.5" stroke="#bdbdbd" stroke-width="1"/>
<text x="732.0" y="151" font-family="Liberation Sans" font-size="9.4" fill="#7b7b7b" text-anchor="middle">12</text>
<path d="M732.0 154.8V158.5" stroke="#bdbdbd" stroke-width="1"/>
<path d="M744.0 154.6V158.5" stroke="#bdbdbd" stroke-width="1"/>
<path d="M756.0 149.2V158.5" stroke="#bdbdbd" stroke-width="1"/>
<path d="M768.1 154.6V158.5" stroke="#bdbdbd" stroke-width="1"/>
<text x="780.2" y="151" font-family="Liberation Sans" font-size="9.4" fill="#7b7b7b" text-anchor="middle">13</text>
<path d="M780.2 154.8V158.5" stroke="#bdbdbd" stroke-width="1"/>
<path d="M792.2 154.6V158.5" stroke="#bdbdbd" stroke-width="1"/>
<path d="M804.2 149.2V158.5" stroke="#bdbdbd" stroke-width="1"/>
<path d="M816.3 154.6V158.5" stroke="#bdbdbd" stroke-width="1"/>
<text x="828.4" y="151" font-family="Liberation Sans" font-size="9.4" fill="#7b7b7b" text-anchor="middle">14</text>
<path d="M828.4 154.8V158.5" stroke="#bdbdbd" stroke-width="1"/>
<path d="M840.4 154.6V158.5" stroke="#bdbdbd" stroke-width="1"/>
<path d="M852.5 149.2V158.5" stroke="#bdbdbd" stroke-width="1"/>
<path d="M864.5 154.6V158.5" stroke="#bdbdbd" stroke-width="1"/>
<text x="876.5" y="151" font-family="Liberation Sans" font-size="9.4" fill="#7b7b7b" text-anchor="middle">15</text>
<path d="M876.5 154.8V158.5" stroke="#bdbdbd" stroke-width="1"/>
<path d="M888.6 154.6V158.5" stroke="#bdbdbd" stroke-width="1"/>
<path d="M900.7 149.2V158.5" stroke="#bdbdbd" stroke-width="1"/>
<path d="M912.7 154.6V158.5" stroke="#bdbdbd" stroke-width="1"/>
<text x="924.8" y="151" font-family="Liberation Sans" font-size="9.4" fill="#7b7b7b" text-anchor="middle">16</text>
<path d="M924.8 154.8V158.5" stroke="#bdbdbd" stroke-width="1"/>
<path d="M936.8 154.6V158.5" stroke="#bdbdbd" stroke-width="1"/>
<path d="M948.9 149.2V158.5" stroke="#bdbdbd" stroke-width="1"/>
<path d="M960.9 154.6V158.5" stroke="#bdbdbd" stroke-width="1"/>
<text x="973.0" y="151" font-family="Liberation Sans" font-size="9.4" fill="#7b7b7b" text-anchor="middle">17</text>
<path d="M973.0 154.8V158.5" stroke="#bdbdbd" stroke-width="1"/>
<path d="M985.0 154.6V158.5" stroke="#bdbdbd" stroke-width="1"/>
<path d="M997.0 149.2V158.5" stroke="#bdbdbd" stroke-width="1"/>
<path d="M1009.1 154.6V158.5" stroke="#bdbdbd" stroke-width="1"/>
<text x="1021.2" y="151" font-family="Liberation Sans" font-size="9.4" fill="#7b7b7b" text-anchor="middle">18</text>
<path d="M1021.2 154.8V158.5" stroke="#bdbdbd" stroke-width="1"/>
<path d="M1033.2 154.6V158.5" stroke="#bdbdbd" stroke-width="1"/>
<path d="M1045.2 149.2V158.5" stroke="#bdbdbd" stroke-width="1"/>
<path d="M1057.3 154.6V158.5" stroke="#bdbdbd" stroke-width="1"/>
<text x="1069.4" y="151" font-family="Liberation Sans" font-size="9.4" fill="#7b7b7b" text-anchor="middle">19</text>
<path d="M1069.4 154.8V158.5" stroke="#bdbdbd" stroke-width="1"/>
<path d="M1081.4 154.6V158.5" stroke="#bdbdbd" stroke-width="1"/>
<path d="M548.4 159V161" stroke="#9a9a9a" stroke-width="1"/>
<path d="M610.4 159V161" stroke="#9a9a9a" stroke-width="1"/>
<path d="M671.4 159V161" stroke="#9a9a9a" stroke-width="1"/>
<path d="M732.4 159V161" stroke="#9a9a9a" stroke-width="1"/>
<path d="M793.4 159V161" stroke="#9a9a9a" stroke-width="1"/>
<path d="M854.4 159V161" stroke="#9a9a9a" stroke-width="1"/>
<path d="M512.4 153.4L516.6 149.4L520.8 153.4V156.6H512.4Z" fill="#fafafa" stroke="#8c8c8c" stroke-width="0.9"/><rect x="512.4" y="156.8" width="8.4" height="3" fill="#fafafa" stroke="#8c8c8c" stroke-width="0.9"/>
</svg></div>
<div id="doc"><div id="page"></div>
<svg class="abs" style="left:0;top:0" width="90" height="456" viewBox="0 164 90 456"><rect x="0" y="164" width="15.5" height="456" fill="#f7f7f7"/><rect x="15.5" y="164" width="6.7" height="456" fill="#f2f2f2"/><path d="M15.5 164V620" stroke="#dadada" stroke-width="1"/><defs><linearGradient id="ps" x1="0" y1="0" x2="1" y2="0"><stop offset="0" stop-color="#e5e5e5"/><stop offset="1" stop-color="#d4d4d4"/></linearGradient></defs><rect x="77" y="164" width="6" height="456" fill="url(#ps)"/><rect x="0" y="181.3" width="15" height="3.6" fill="#dcdcdc"/><rect x="0" y="203.3" width="15" height="3.6" fill="#dcdcdc"/><rect x="0" y="247.3" width="15" height="3.6" fill="#dcdcdc"/><rect x="0" y="269.3" width="15" height="3.6" fill="#dcdcdc"/><rect x="0" y="291.3" width="15" height="3.6" fill="#dcdcdc"/><rect x="0" y="314.3" width="15" height="3.6" fill="#dcdcdc"/><rect x="0" y="357.3" width="15" height="3.6" fill="#dcdcdc"/><rect x="0" y="380.3" width="15" height="3.6" fill="#dcdcdc"/><rect x="0" y="402.3" width="15" height="3.6" fill="#dcdcdc"/><rect x="0" y="424.3" width="15" height="3.6" fill="#dcdcdc"/><rect x="0" y="468.3" width="15" height="3.6" fill="#dcdcdc"/><rect x="0" y="490.3" width="15" height="3.6" fill="#dcdcdc"/><rect x="0" y="512.3" width="15" height="3.6" fill="#dcdcdc"/><rect x="0" y="535.3" width="15" height="3.6" fill="#dcdcdc"/><path d="M6.6 174.5H15" stroke="#b5b5b5" stroke-width="1"/><path d="M11 186.6H15" stroke="#b5b5b5" stroke-width="1"/><text transform="translate(8.6 198.6) rotate(-90)" font-family="Liberation Sans" font-size="8.8" fill="#7b7b7b" text-anchor="middle">5</text><path d="M11.4 198.6H15" stroke="#b5b5b5" stroke-width="1"/><path d="M11 210.6H15" stroke="#b5b5b5" stroke-width="1"/><path d="M6.6 222.7H15" stroke="#b5b5b5" stroke-width="1"/><path d="M11 234.7H15" stroke="#b5b5b5" stroke-width="1"/><text transform="translate(8.6 246.7) rotate(-90)" font-family="Liberation Sans" font-size="8.8" fill="#7b7b7b" text-anchor="middle">6</text><path d="M11.4 246.7H15" stroke="#b5b5b5" stroke-width="1"/><path d="M11 258.8H15" stroke="#b5b5b5" stroke-width="1"/><path d="M6.6 270.8H15" stroke="#b5b5b5" stroke-width="1"/><path d="M11 282.8H15" stroke="#b5b5b5" stroke-width="1"/><text transform="translate(8.6 294.8) rotate(-90)" font-family="Liberation Sans" font-size="8.8" fill="#7b7b7b" text-anchor="middle">7</text><path d="M11.4 294.8H15" stroke="#b5b5b5" stroke-width="1"/><path d="M11 306.9H15" stroke="#b5b5b5" stroke-width="1"/><path d="M6.6 318.9H15" stroke="#b5b5b5" stroke-width="1"/><path d="M11 330.9H15" stroke="#b5b5b5" stroke-width="1"/><text transform="translate(8.6 343.0) rotate(-90)" font-family="Liberation Sans" font-size="8.8" fill="#7b7b7b" text-anchor="middle">8</text><path d="M11.4 343.0H15" stroke="#b5b5b5" stroke-width="1"/><path d="M11 355.0H15" stroke="#b5b5b5" stroke-width="1"/><path d="M6.6 367.0H15" stroke="#b5b5b5" stroke-width="1"/><path d="M11 379.0H15" stroke="#b5b5b5" stroke-width="1"/><text transform="translate(8.6 391.1) rotate(-90)" font-family="Liberation Sans" font-size="8.8" fill="#7b7b7b" text-anchor="middle">9</text><path d="M11.4 391.1H15" stroke="#b5b5b5" stroke-width="1"/><path d="M11 403.1H15" stroke="#b5b5b5" stroke-width="1"/><path d="M6.6 415.1H15" stroke="#b5b5b5" stroke-width="1"/><path d="M11 427.2H15" stroke="#b5b5b5" stroke-width="1"/><text transform="translate(8.6 439.2) rotate(-90)" font-family="Liberation Sans" font-size="8.8" fill="#7b7b7b" text-anchor="middle">10</text><path d="M11.4 439.2H15" stroke="#b5b5b5" stroke-width="1"/><path d="M11 451.2H15" stroke="#b5b5b5" stroke-width="1"/><path d="M6.6 463.3H15" stroke="#b5b5b5" stroke-width="1"/><path d="M11 475.3H15" stroke="#b5b5b5" stroke-width="1"/><text transform="translate(8.6 487.3) rotate(-90)" font-family="Liberation Sans" font-size="8.8" fill="#7b7b7b" text-anchor="middle">11</text><path d="M11.4 487.3H15" stroke="#b5b5b5" stroke-width="1"/><path d="M11 499.4H15" stroke="#b5b5b5" stroke-width="1"/><path d="M6.6 511.4H15" stroke="#b5b5b5" stroke-width="1"/><path d="M11 523.4H15" stroke="#b5b5b5" stroke-width="1"/><text transform="translate(8.6 535.4) rotate(-90)" font-family="Liberation Sans" font-size="8.8" fill="#7b7b7b" text-anchor="middle">12</text><path d="M11.4 535.4H15" stroke="#b5b5b5" stroke-width="1"/><path d="M11 547.5H15" stroke="#b5b5b5" stroke-width="1"/><path d="M6.6 559.5H15" stroke="#b5b5b5" stroke-width="1"/><path d="M11 571.5H15" stroke="#b5b5b5" stroke-width="1"/><text transform="translate(8.6 583.6) rotate(-90)" font-family="Liberation Sans" font-size="8.8" fill="#7b7b7b" text-anchor="middle">13</text><path d="M11.4 583.6H15" stroke="#b5b5b5" stroke-width="1"/><path d="M11 595.6H15" stroke="#b5b5b5" stroke-width="1"/><path d="M6.6 607.6H15" stroke="#b5b5b5" stroke-width="1"/><path d="M11 619.6H15" stroke="#b5b5b5" stroke-width="1"/></svg>
<svg class="abs" style="left:0;top:0" width="1149" height="456"><path d="M142.9 16.5H1033.1M142.9 38.5H1033.1M142.9 82.5H1033.1M142.9 104.5H1033.1M142.9 126.5H1033.1M142.9 149.5H1033.1M142.9 192.5H1033.1M142.9 215.5H1033.1M142.9 237.5H1033.1M142.9 259.5H1033.1M142.9 303.5H1033.1M142.9 325.5H1033.1M142.9 347.5H1033.1M142.9 370.5H1033.1M143.5 0.0V456.0M1032.5 0.0V456.0M186.5 82.5V325.5M610.5 38.5V325.5M610.5 347.5V456.0M683.5 82.5V325.5M815.5 82.5V325.5M936.5 82.5V325.5M983.5 82.5V325.5M755.5 38.5V325.5M876.5 0.0V16.5M876.5 38.5V325.5M587.5 0.0V16.5M635.5 0.0V16.5M675.5 0.0V16.5M722.5 0.0V16.5M782.5 0.0V16.5" stroke="#000" stroke-width="1.3" fill="none"/></svg>
<div class="cb" style="left:601.5px;top:-0.9px"></div>
<div class="cb" style="left:645.9px;top:-0.9px"></div>
<div class="cb" style="left:689.5px;top:-0.9px"></div>
<div class="cb" style="left:742.8px;top:-0.9px"></div>
<div class="cb" style="left:819.7px;top:-0.9px"></div>
<div class="cb" style="left:892.6px;top:-0.9px"></div>
<div class="t " style="left:145.0px;top:-6.3px;">trainee</div>
<div class="t b" style="left:145.0px;top:16.9px;font-weight:bold">Grade the following taking in consideration the level of training:</div>
<div class="t " style="left:168.0px;top:49.7px;">Please grade the following areas using the scale below:</div>
<div class="t " style="left:161.0px;transform:translateX(-50%);top:82.7px;">#</div>
<div class="t " style="left:394.5px;transform:translateX(-50%);top:82.7px;">Procedural skill</div>
<div class="t " style="left:160.5px;transform:translateX(-50%);top:104.7px;">1</div>
<div class="t " style="left:187.3px;top:104.7px;">Select appropriate ingredients</div>
<div class="t " style="left:160.5px;transform:translateX(-50%);top:126.6px;">2</div>
<div class="t " style="left:187.3px;top:126.6px;">Perform accurate pharmaceutical calculations</div>
<div class="t " style="left:160.5px;transform:translateX(-50%);top:149.8px;">3</div>
<div class="t " style="left:187.3px;top:149.8px;">Compound dosage form according to formulation</div>
<div class="t " style="left:193.2px;top:171.6px;">standards</div>
<div class="t " style="left:160.5px;transform:translateX(-50%);top:192.9px;">4</div>
<div class="t " style="left:187.3px;top:192.9px;">Ensure appropriate packaging</div>
<div class="t " style="left:160.5px;transform:translateX(-50%);top:215.6px;">5</div>
<div class="t " style="left:187.3px;top:215.6px;">Ensure correct labeling</div>
<div class="t " style="left:160.5px;transform:translateX(-50%);top:237.6px;">6</div>
<div class="t " style="left:187.3px;top:237.6px;">Use aseptic technique</div>
<div class="t " style="left:160.5px;transform:translateX(-50%);top:259.8px;">7</div>
<div class="t " style="left:187.3px;top:259.8px;">Ensure cleanliness of compounding area and</div>
<div class="t " style="left:193.2px;top:281.6px;">instruments</div>
<div class="t " style="left:160.5px;transform:translateX(-50%);top:303.5px;">8</div>
<div class="t " style="left:187.3px;top:303.5px;">Overall ability to perform the procedure</div>
<div class="t " style="left:679.5px;transform:translateX(-50%);top:38.6px;">Unsatisfactory</div>
<div class="t " style="left:812.0px;transform:translateX(-50%);top:38.6px;">Satisfactory</div>
<div class="t " style="left:893.0px;top:38.6px;">Superior</div>
<div class="t " style="left:642.4px;transform:translateX(-50%);top:82.7px;">1</div>
<div class="t " style="left:714.8px;transform:translateX(-50%);top:82.7px;">2</div>
<div class="t " style="left:781.5px;transform:translateX(-50%);top:82.7px;">3</div>
<div class="t " style="left:841.5px;transform:translateX(-50%);top:82.7px;">4</div>
<div class="t " style="left:901.0px;transform:translateX(-50%);top:82.7px;">5</div>
<div class="cb" style="left:637.7px;top:109.9px"></div>
<div class="cb" style="left:710.0px;top:109.9px"></div>
<div class="cb" style="left:776.8px;top:109.9px"></div>
<div class="cb" style="left:836.8px;top:109.9px"></div>
<div class="cb" style="left:896.3px;top:109.9px"></div>
<div class="cb" style="left:951.1px;top:109.9px"></div>
<div class="cb" style="left:998.6px;top:109.9px"></div>
<div class="cb" style="left:637.7px;top:131.9px"></div>
<div class="cb" style="left:710.0px;top:131.9px"></div>
<div class="cb" style="left:776.8px;top:131.9px"></div>
<div class="cb" style="left:836.8px;top:131.9px"></div>
<div class="cb" style="left:896.3px;top:131.9px"></div>
<div class="cb" style="left:951.1px;top:131.9px"></div>
<div class="cb" style="left:998.6px;top:131.9px"></div>
<div class="cb" style="left:637.7px;top:154.9px"></div>
<div class="cb" style="left:710.0px;top:154.9px"></div>
<div class="cb" style="left:776.8px;top:154.9px"></div>
<div class="cb" style="left:836.8px;top:154.9px"></div>
<div class="cb" style="left:896.3px;top:154.9px"></div>
<div class="cb" style="left:951.1px;top:154.9px"></div>
<div class="cb" style="left:998.6px;top:154.9px"></div>
<div class="cb" style="left:637.7px;top:198.1px"></div>
<div class="cb" style="left:710.0px;top:198.1px"></div>
<div class="cb" style="left:776.8px;top:198.1px"></div>
<div class="cb" style="left:836.8px;top:198.1px"></div>
<div class="cb" style="left:896.3px;top:198.1px"></div>
<div class="cb" style="left:951.1px;top:198.1px"></div>
<div class="cb" style="left:998.6px;top:198.1px"></div>
<div class="cb" style="left:637.7px;top:242.5px"></div>
<div class="cb" style="left:710.0px;top:242.5px"></div>
<div class="cb" style="left:776.8px;top:242.5px"></div>
<div class="cb" style="left:836.8px;top:242.5px"></div>
<div class="cb" style="left:896.3px;top:242.5px"></div>
<div class="cb" style="left:951.1px;top:242.5px"></div>
<div class="cb" style="left:998.6px;top:242.5px"></div>
<div class="cb" style="left:637.7px;top:264.9px"></div>
<div class="cb" style="left:710.0px;top:264.9px"></div>
<div class="cb" style="left:776.8px;top:264.9px"></div>
<div class="cb" style="left:836.8px;top:264.9px"></div>
<div class="cb" style="left:896.3px;top:264.9px"></div>
<div class="cb" style="left:951.1px;top:264.9px"></div>
<div class="cb" style="left:998.6px;top:264.9px"></div>
<div class="cb" style="left:637.7px;top:308.9px"></div>
<div class="cb" style="left:710.0px;top:308.9px"></div>
<div class="cb" style="left:776.8px;top:308.9px"></div>
<div class="cb" style="left:836.8px;top:308.9px"></div>
<div class="cb" style="left:896.3px;top:308.9px"></div>
<div class="cb" style="left:951.1px;top:308.9px"></div>
<div class="cb" style="left:998.6px;top:308.9px"></div>
<div class="t " style="left:584.0px;transform:translateX(-50%);top:326.4px;">U/C* Please mark this if you have not observed the <span id="beh">behaviour</span> and therefore are not able to comment</div>
<svg class="abs" style="left:0;top:0" width="1149" height="456"><polyline points="597.60 344.35 599.30 346.45 601.00 344.35 602.70 346.45 604.40 344.35 606.10 346.45 607.80 344.35 609.50 346.45 611.20 344.35 612.90 346.45 614.60 344.35 616.30 346.45 618.00 344.35 619.70 346.45 621.40 344.35 623.10 346.45 624.80 344.35 626.50 346.45 628.20 344.35 629.90 346.45 631.60 344.35 633.30 346.45 635.00 344.35 636.70 346.45 638.40 344.35 640.10 346.45 641.80 344.35 643.50 346.45 645.20 344.35 646.90 346.45 648.60 344.35 650.30 346.45 652.00 344.35 653.70 346.45 655.40 344.35 657.10 346.45 658.80 344.35 660.50 346.45 662.20 344.35 663.90 346.45 665.60 344.35 667.30 346.45 669.00 344.35 670.70 346.45 672.40 344.35" fill="none" stroke="#e2352b" stroke-width="0.95" stroke-linejoin="round"/></svg>
<div class="t " style="left:373.5px;transform:translateX(-50%);top:347.9px;">What did the trainee do well?</div>
<div class="t " style="left:818.0px;transform:translateX(-50%);top:347.9px;">Areas for improvement</div>
<div class="abs" style="left:0;top:424px;width:1149px;height:32px;background:linear-gradient(rgba(0,0,0,0),rgba(0,0,0,0.03) 45%,rgba(0,0,0,0.09))"></div>
</div>
</div>
<div id="zoom">
<svg class="abs" style="left:0;top:0" width="243" height="293.5" viewBox="906 6 243 293.5">
<defs>
 <linearGradient id="gb" x1="0" y1="0" x2="0" y2="1"><stop offset="0" stop-color="#dcea7a"/><stop offset="0.045" stop-color="#d6e874"/><stop offset="0.16" stop-color="#9dd650"/><stop offset="0.8" stop-color="#8fd14a"/><stop offset="0.955" stop-color="#c3de62"/><stop offset="1" stop-color="#cfe36a"/></linearGradient>
 <clipPath id="c1"><rect x="912.2" y="12.2" width="159.9" height="89.7"/></clipPath>
 <clipPath id="c2"><rect x="1078.2" y="12" width="71" height="89.8"/></clipPath>
 <clipPath id="c3"><rect x="912" y="108" width="160" height="89.6"/></clipPath>
 <clipPath id="c4"><rect x="1078.2" y="108" width="71" height="89.6"/></clipPath>
 <filter id="bl" x="-5%" y="-5%" width="110%" height="110%"><feGaussianBlur stdDeviation="0.9"/></filter>
 <filter id="bl2" x="-5%" y="-5%" width="110%" height="110%"><feGaussianBlur stdDeviation="1.6"/></filter>
 <linearGradient id="red" x1="0" y1="0" x2="1" y2="0"><stop offset="0" stop-color="#8e1f22"/><stop offset="1" stop-color="#a92a2c"/></linearGradient>
 <linearGradient id="wall1" x1="0" y1="0" x2="1" y2="0"><stop offset="0" stop-color="#c2b6a8"/><stop offset="1" stop-color="#d3cbc0"/></linearGradient>
</defs>
<rect x="906" y="6" width="243" height="293.5" fill="#111"/>
<rect x="907.9" y="7.9" width="168.4" height="98" fill="url(#gb)"/>
<!-- tile 1 -->
<g clip-path="url(#c1)"><g filter="url(#bl)">
 <rect x="905" y="8" width="175" height="100" fill="url(#wall1)"/>
 <ellipse cx="1040" cy="30" rx="30" ry="20" fill="#dcd5cb" opacity="0.7"/>
 <path d="M1000 60H1075M1010 70H1075M1020 80H1075M1030 90H1075M1000 50H1075" stroke="#b5aa9d" stroke-width="0.8" opacity="0.6"/>
 <rect x="905" y="8" width="29" height="100" fill="#3f3c2e"/>
 <rect x="912" y="12" width="18" height="14" fill="#6a6a58"/>
 <path d="M932 8H935.4L931.6 50H928.4Z" fill="#cfc9b4"/>
 <rect x="915" y="42" width="12" height="8" fill="#2a271f"/>
 <path d="M934.6 8H988.8V92H930Z" fill="url(#red)"/>
 <!-- sweater -->
 <path d="M946 108C948 92 956 84 970 75L983 66H1013L1037 72C1052 78 1060 92 1063 108Z" fill="#4a4f4c"/>
 <!-- collar & tie -->
 <path d="M982 68L1001 86L1014.4 68L1012 62H986Z" fill="#eceae8"/>
 <path d="M996.4 79H1008.6L1009.4 84L1003 90.6L996 84Z" fill="#1f46c8"/>
 <!-- head -->
 <ellipse cx="997.2" cy="48" rx="18.6" ry="27" fill="#cfa48f"/>
 <ellipse cx="1003" cy="40" rx="9" ry="10" fill="#debba6" opacity="0.7"/>
 <path d="M979 40C977.6 24 987 17.4 998 17.4C1010 17.4 1017 25 1015.6 40C1013.6 28 1007 23.6 998 23.6C988 23.6 981.4 28 979 40Z" fill="#7f7f82"/>
 <rect x="980" y="36.4" width="15.6" height="10.6" rx="2.4" fill="#b59a8c" stroke="#3f302a" stroke-width="1.1"/>
 <rect x="998.6" y="35.6" width="15.8" height="10.6" rx="2.4" fill="#b59a8c" stroke="#3f302a" stroke-width="1.1"/>
 <path d="M987 55.4C993 53.4 1001 53.4 1008 55.4" stroke="#8d8781" stroke-width="2.2" fill="none"/>
 <path d="M989 59C995 57.6 1002 57.6 1008 59C1002 62.4 995 62.4 989 59Z" fill="#8a4a44"/>
 <!-- hand -->
 <path d="M912 108L912 58C912 52 917 52 918 58L921 72L921.6 52C921.8 44.6 930.6 44.6 931.2 52L932 68L932.6 55C933 48 941 48.6 941.2 55L943 76C945 78 947 80 948 82C951 77 956 76 958 79C956 90 951 100 948 108Z" fill="#d1a891"/>
 <path d="M914 80C922 76 934 78 942 84L946 100L914 106Z" fill="#dcb7a2" opacity="0.7"/>
</g></g>
<!-- tile 2 -->
<g clip-path="url(#c2)"><g filter="url(#bl)">
 <rect x="1075" y="8" width="80" height="100" fill="#d5d7dd"/>
 <path d="M1075 8H1155V30L1075 15Z" fill="#e6e6e9"/>
 <path d="M1078 16.7L1131 26.6" stroke="#3d3d45" stroke-width="1.2" stroke-dasharray="3.4 1.4"/>
 <path d="M1075 30L1086 30L1075 56Z" fill="#c4c7cf"/>
 <path d="M1090.6 34L1117 37.3L1105.4 95L1075 94V66Z" fill="#fdfdfe"/>
 <path d="M1075 31H1080.6L1078.6 38H1075Z" fill="#fbfbfd"/>
 <path d="M1075 94.6H1106V104H1075Z" fill="#bcc5d4"/>
 <path d="M1125.6 34L1112.6 92M1121 42L1110.4 92" stroke="#6d6f7a" stroke-width="0.9" stroke-dasharray="1.4 2.2"/>
 <path d="M1106.2 108L1108 96L1114 91.6L1121 94L1119 108Z" fill="#2c3a66"/>
 <path d="M1114 108L1124.3 85C1129 76 1134 70 1135 65C1134.6 61 1136 57.6 1137.5 55.4C1140 48 1145 43.4 1152 41V108Z" fill="#c3b298"/>
 <path d="M1136 60C1134 74 1132 88 1128 104" stroke="#a89880" stroke-width="1.4" fill="none"/>
 <path d="M1143 62L1152 60V72L1144.6 70Z" fill="#c98d6c"/>
 <path d="M1142.6 62.6H1152" stroke="#b5643a" stroke-width="1.1"/>
</g></g>
<!-- tile 3 -->
<g clip-path="url(#c3)"><g filter="url(#bl)">
 <rect x="905" y="104" width="175" height="100" fill="#dedcc5"/>
 <rect x="905" y="104" width="22" height="100" fill="#cdd0ba"/>
 <rect x="985" y="104" width="50" height="100" fill="#e2e0cb"/>
 <path d="M922.5 104H977V131L970.5 133.6L922.5 113Z" fill="#7d6c5e"/>
 <path d="M953 104H977V131L971 128.5Z" fill="#57514b"/>
 <rect x="1034.6" y="104" width="40" height="27" fill="#2b2420"/>
 <rect x="1003" y="117.2" width="21.4" height="15.4" fill="#3a3633"/><rect x="1004.8" y="119" width="17.8" height="11.8" fill="#e9ebee"/><rect x="1006.4" y="122" width="14.4" height="4.4" fill="#a9b9a4"/>
 <rect x="1003.4" y="132.6" width="48" height="6.6" fill="#7a5648"/>
 <ellipse cx="1048" cy="123" rx="6" ry="6" fill="#5c2f35"/><circle cx="1048" cy="119" r="2" fill="#b04a50"/>
 <rect x="1066" y="114" width="6" height="18" fill="#2c8a96"/><rect x="1062" y="118" width="4" height="14" fill="#2a4a9a"/>
 <circle cx="1032" cy="129" r="2.6" fill="#b5b5b0"/>
 <path d="M1072 126C1058 128 1046 134 1040 144C1036 152 1040 160 1046 166C1044 176 1050 190 1056 200H1075Z" fill="#20382a"/><path d="M1034.0 166.0L1017.5 175.5M1034.0 166.0L1015.5 170.4M1034.0 166.0L1015.0 164.9M1034.0 166.0L1016.1 159.5M1034.0 166.0L1018.8 154.7M1034.0 166.0L1022.7 150.8M1034.0 166.0L1027.5 148.1M1034.0 166.0L1032.9 147.0M1034.0 166.0L1038.4 147.5M1034.0 166.0L1043.5 149.5M1034.0 166.0L1047.8 153.0M1034.0 166.0L1051.0 157.5M1034.0 166.0L1052.7 162.7M1034.0 166.0L1052.9 168.2M1034.0 166.0L1051.4 173.5M1034.0 166.0L1048.6 178.2" stroke="#21402b" stroke-width="2.3" stroke-linecap="round" fill="none"/><path d="M1041.0 187.0L1033.0 200.9M1041.0 187.0L1028.7 197.3M1041.0 187.0L1026.0 192.5M1041.0 187.0L1025.0 187.0M1041.0 187.0L1026.0 181.5M1041.0 187.0L1028.7 176.7M1041.0 187.0L1033.0 173.1M1041.0 187.0L1038.2 171.2M1041.0 187.0L1043.8 171.2M1041.0 187.0L1049.0 173.1M1041.0 187.0L1053.3 176.7M1041.0 187.0L1056.0 181.5M1041.0 187.0L1057.0 187.0M1041.0 187.0L1056.0 192.5M1041.0 187.0L1053.3 197.3M1041.0 187.0L1049.0 200.9" stroke="#1e3a28" stroke-width="2.2" stroke-linecap="round" fill="none"/><path d="M1060.0 184.0L1044.0 189.8M1060.0 184.0L1043.0 184.9M1060.0 184.0L1043.5 179.9M1060.0 184.0L1045.4 175.3M1060.0 184.0L1048.6 171.4M1060.0 184.0L1052.7 168.6M1060.0 184.0L1057.5 167.2M1060.0 184.0L1062.5 167.2M1060.0 184.0L1067.3 168.6M1060.0 184.0L1071.4 171.4M1060.0 184.0L1074.6 175.3M1060.0 184.0L1076.5 179.9M1060.0 184.0L1077.0 184.9M1060.0 184.0L1076.0 189.8" stroke="#1c3324" stroke-width="2.4" stroke-linecap="round" fill="none"/><path d="M1052.0 150.0L1034.0 150.0M1052.0 150.0L1035.0 144.2M1052.0 150.0L1037.7 139.0M1052.0 150.0L1042.0 135.0M1052.0 150.0L1047.3 132.6M1052.0 150.0L1053.2 132.0M1052.0 150.0L1058.9 133.4M1052.0 150.0L1063.9 136.5M1052.0 150.0L1067.6 141.0" stroke="#2d5235" stroke-width="2.2" stroke-linecap="round" fill="none"/><path d="M1034.0 166.0L1017.3 169.0M1034.0 166.0L1017.8 161.0M1034.0 166.0L1021.8 154.1M1034.0 166.0L1028.6 149.9M1034.0 166.0L1036.5 149.2M1034.0 166.0L1043.9 152.2M1034.0 166.0L1049.1 158.2M1034.0 166.0L1051.0 166.0" stroke="#3d6a45" stroke-width="1.0" stroke-linecap="round" fill="none"/><path d="M1056.0 146.0L1041.9 140.9M1056.0 146.0L1045.2 135.6M1056.0 146.0L1050.4 132.1M1056.0 146.0L1056.5 131.0M1056.0 146.0L1062.6 132.5M1056.0 146.0L1067.5 136.4" stroke="#4f7d4f" stroke-width="1.2" stroke-linecap="round" fill="none"/>
 <rect x="920.8" y="160.8" width="28" height="16" rx="3" fill="#f3f3f3"/>
 <rect x="974" y="163" width="12" height="10" rx="3" fill="#e8e8e2"/>
 <path d="M910 200C912 186 914 180 924 177L948 170H972L995 175.6C1000 180 1002 190 1005 200Z" fill="#2b3f9c"/>
 <path d="M948.6 170L953 200H973L971.6 170Z" fill="#f1f1f3"/>
 <circle cx="961.6" cy="184" r="0.9" fill="#333"/><circle cx="961.8" cy="190" r="0.9" fill="#333"/><circle cx="962" cy="196" r="0.9" fill="#333"/>
 <path d="M981 190.6L988.6 187.4L989.6 189.4L982 193Z" fill="#f4f4f4"/>
 <ellipse cx="960" cy="153.6" rx="14.8" ry="20.2" fill="#c8926f"/>
 <ellipse cx="960" cy="142" rx="10" ry="7" fill="#d9a98a" opacity="0.8"/>
 <path d="M945.4 152C944.4 144 946 139 949 136C947.6 141 947.4 146 947.6 152Z" fill="#4a382e"/>
 <path d="M974.6 152C975.6 144 974 139 971 136C972.4 141 972.6 146 972.4 152Z" fill="#4a382e"/>
 <path d="M948 160C949 170 955 175 960 175C965 175 971 170 972 160C968 165 952 165 948 160Z" fill="#3b2a22"/>
 <path d="M953.4 160.6C957 158.8 963 158.8 966.6 160.6C963 163.6 957 163.6 953.4 160.6Z" fill="#eadfd8"/>
 <path d="M952 158.6C957 156.4 963 156.4 968 158.6" stroke="#3b2a22" stroke-width="1.6" fill="none"/>
 <path d="M946 150.6H974" stroke="#c9c3ba" stroke-width="1"/>
 <rect x="948" y="148" width="10.6" height="5.4" rx="1.6" fill="none" stroke="#d9d3ca" stroke-width="0.7"/><rect x="961.4" y="148" width="10.6" height="5.4" rx="1.6" fill="none" stroke="#d9d3ca" stroke-width="0.7"/>
</g></g>
<!-- tile 4 -->
<g clip-path="url(#c4)"><g filter="url(#bl)">
 <rect x="1075" y="104" width="80" height="100" fill="#dadada"/>
 <rect x="1078" y="108" width="40" height="90" fill="#e3e3e7"/>
 <rect x="1080" y="110" width="14" height="24" fill="#ececf0" stroke="#c4c4ca" stroke-width="0.6"/>
 <rect x="1096" y="110" width="18" height="24" fill="#e0e0e4" stroke="#c4c4ca" stroke-width="0.6"/>
 <rect x="1080" y="136" width="16" height="26" fill="#ebebee" stroke="#c4c4ca" stroke-width="0.6"/>
 <rect x="1098" y="138" width="16" height="24" fill="#e6e6ea" stroke="#c4c4ca" stroke-width="0.6"/>
 <rect x="1080" y="164" width="14" height="30" fill="#e9e9ec" stroke="#c4c4ca" stroke-width="0.6"/>
 <rect x="1096" y="164" width="18" height="30" fill="#e4e4e8" stroke="#c4c4ca" stroke-width="0.6"/>
 <path d="M1082 116H1092M1082 120H1092M1098 116H1112M1098 122H1110M1082 144H1094M1082 150H1092M1100 146H1112M1100 152H1110M1082 172H1092M1082 180H1092M1098 172H1112M1098 180H1110" stroke="#b6b6bf" stroke-width="0.8"/>
 <circle cx="1104" cy="133" r="1.2" fill="#c03040"/><circle cx="1104" cy="137" r="1.2" fill="#c03040"/>
 <rect x="1115" y="108" width="4.4" height="90" fill="#f3f3f4"/>
 <rect x="1119.4" y="108" width="30" height="90" fill="#dcdcdc"/>
 <path d="M1119 200C1121 190 1128 186 1138 182C1142 178 1146 172 1152 170V200Z" fill="#1a1a1d"/>
 <path d="M1143 184C1143 172 1144 166 1152 164V184Z" fill="#1d1d20"/>
</g></g>
<rect x="912" y="203.8" width="160" height="90" fill="#242424"/>
<rect x="1078.2" y="203.8" width="71" height="90" fill="#242424"/>
</svg>
<div class="abs" id="zname" style="left:25.4px;top:231px;color:#fff;font-size:19.2px;line-height:24px;white-space:nowrap;letter-spacing:0px;-webkit-text-stroke:0.35px #fff">maryam saleh</div>
<div class="abs" id="zname2" dir="rtl" style="left:203px;top:227px;color:#fff;font-family:'DejaVu Sans','Liberation Sans',sans-serif;font-size:19px;line-height:28px;white-space:nowrap;font-weight:bold">الخطيب</div>
</div>
</body></html>
